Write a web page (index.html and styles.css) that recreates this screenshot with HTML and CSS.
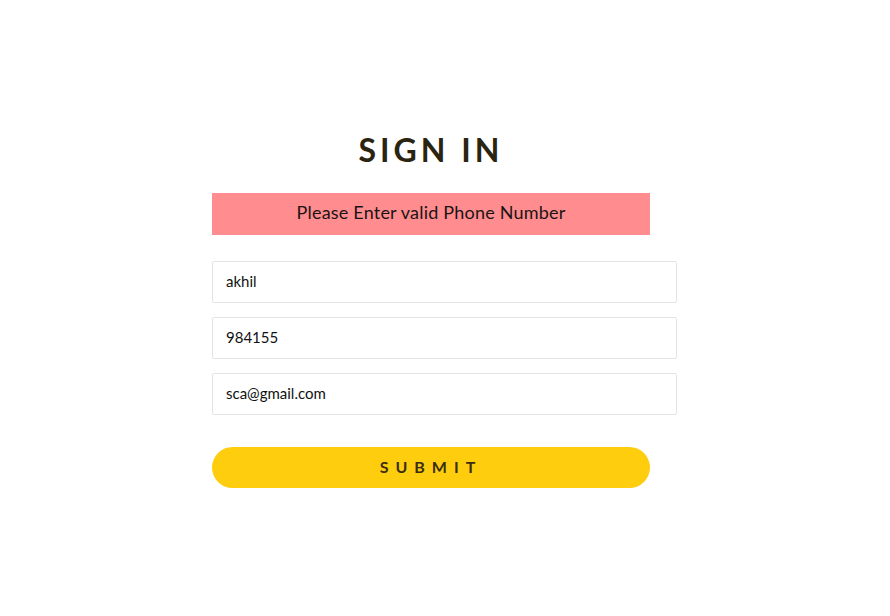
FILE: index.html
```html
<!DOCTYPE html>
<html>
<head>
<meta charset="utf-8">
<link rel="stylesheet" href="styles.css">
</head>
<body>
<main class="page">
  <form class="signin">
    <h1 class="title">SIGN IN</h1>
    <div class="error">Please Enter valid Phone Number</div>
    <div class="fields">
      <input class="field" type="text" value="akhil">
      <input class="field" type="text" value="984155">
      <input class="field" type="text" value="sca@gmail.com">
    </div>
    <button class="submit" type="button">SUBMIT</button>
  </form>
</main>
</body>
</html>
```
FILE: styles.css
```css
* { box-sizing: border-box; }
html, body { margin: 0; background: #fff; }
body { font-family: Lato, "Open Sans", sans-serif; color: #1d1a14; }
.page { display: flex; padding: 128px 0 0 212px; }
.signin { width: 465px; display: flex; flex-direction: column; }
.title {
  width: 438px;
  margin: 0;
  text-align: center;
  font-size: 32px;
  font-weight: 700;
  letter-spacing: 4px;
  color: #2a2410;
  line-height: 44px;
  padding-left: 0;
}
.error {
  width: 438px;
  height: 42px;
  margin-top: 21px;
  padding-bottom: 4px;
  background: #ff8c8f;
  display: flex;
  align-items: center;
  justify-content: center;
  font-size: 18px;
  letter-spacing: 0.2px;
  color: #1b1414;
}
.fields { margin-top: 26px; display: flex; flex-direction: column; gap: 14px; }
.field {
  width: 465px;
  height: 42px;
  border: 1px solid #e4e4e4;
  border-radius: 2px;
  padding: 0 13px 2px;
  font-family: inherit;
  font-size: 15px;
  color: #111;
  background: #fff;
  outline: none;
}
.submit {
  width: 438px;
  height: 41px;
  margin-top: 32px;
  border: none;
  border-radius: 21px;
  background: #fdcd0e;
  font-family: inherit;
  font-size: 16px;
  font-weight: 700;
  letter-spacing: 7px;
  color: #3a2e10;
  padding: 0 0 3px 0;
}
```
